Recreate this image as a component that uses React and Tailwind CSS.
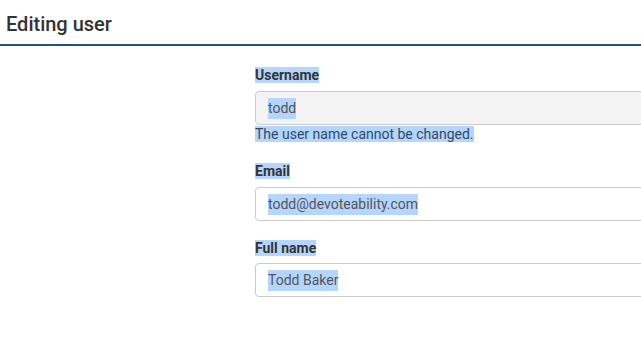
export default function App() {
  const hl = 'bg-[#b4d5fe]';

  return (
    <div className="w-[641px] h-[357px] overflow-hidden bg-white font-['Roboto',sans-serif] text-[#333]">
      {/* Header */}
      <div className="h-[46px] border-b-2 border-[#24507a] pl-[6px] pt-[11px]">
        <h1 className="text-[20px] leading-[26px] font-medium text-[#333]">Editing user</h1>
      </div>

      {/* Form */}
      <div className="ml-[255px] pt-[21px] w-[430px]">
        <div>
          <label className="block text-[14px] font-bold leading-[17px] text-[#333]">
            <span className={hl}>Username</span>
          </label>
          <div className="mt-[7px] h-[34px] border border-[#ccc] rounded-[4px] bg-[#f3f3f3] px-[12px] flex items-center text-[14px] text-[#555]">
            <span className={hl}>todd</span>
          </div>
          <p className="pt-[1px] text-[14px] leading-[17px] text-[#2f4a66]">
            <span className={hl}>The user name cannot be changed.</span>
          </p>
        </div>

        <div className="mt-[20px]">
          <label className="block text-[14px] font-bold leading-[17px] text-[#333]">
            <span className={hl}>Email</span>
          </label>
          <div className="mt-[7px] h-[34px] border border-[#ccc] rounded-[4px] bg-white px-[12px] flex items-center text-[14px] text-[#555]">
            <span className={hl}>todd@devoteability.com</span>
          </div>
        </div>

        <div className="mt-[19px]">
          <label className="block text-[14px] font-bold leading-[17px] text-[#333]">
            <span className={hl}>Full name</span>
          </label>
          <div className="mt-[6px] h-[34px] border border-[#ccc] rounded-[4px] bg-white px-[12px] flex items-center text-[14px] text-[#555]">
            <span className={hl}>Todd Baker</span>
          </div>
        </div>
      </div>
    </div>
  );
}
